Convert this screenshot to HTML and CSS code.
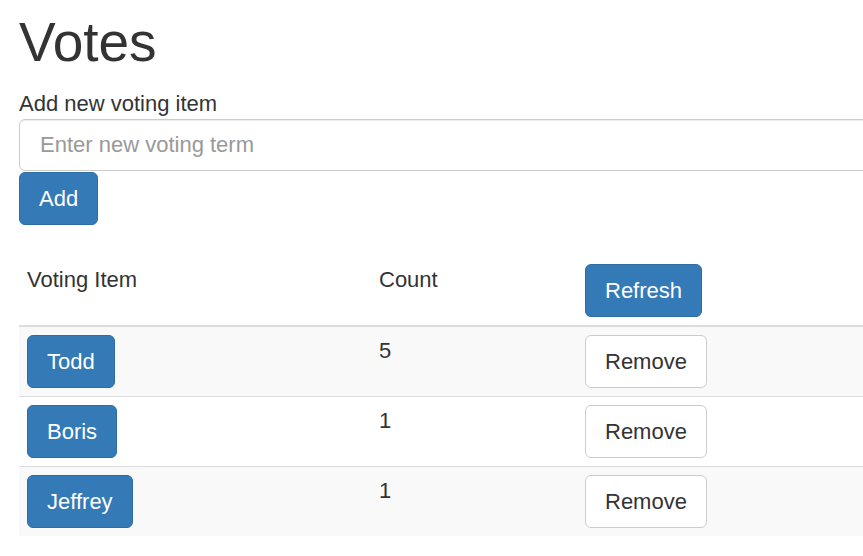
FILE: index.html
```html
<!DOCTYPE html>
<html lang="en">
<head>
<meta charset="utf-8">
<title>Votes</title>
<link rel="stylesheet" href="styles.css">
</head>
<body>
<div class="page">
  <h1 class="title">Votes</h1>
  <form class="add-form">
    <label class="field-label" for="term">Add new voting item</label>
    <input class="field-input" id="term" type="text" placeholder="Enter new voting term">
    <button class="btn btn-primary add-btn" type="button">Add</button>
  </form>
  <table class="votes-table">
    <colgroup>
      <col class="col-item">
      <col class="col-count">
      <col class="col-action">
    </colgroup>
    <thead>
      <tr>
        <th>Voting Item</th>
        <th>Count</th>
        <th><button class="btn btn-primary" type="button">Refresh</button></th>
      </tr>
    </thead>
    <tbody>
      <tr class="striped">
        <td><button class="btn btn-primary" type="button">Todd</button></td>
        <td>5</td>
        <td><button class="btn btn-default" type="button">Remove</button></td>
      </tr>
      <tr>
        <td><button class="btn btn-primary" type="button">Boris</button></td>
        <td>1</td>
        <td><button class="btn btn-default" type="button">Remove</button></td>
      </tr>
      <tr class="striped">
        <td><button class="btn btn-primary" type="button">Jeffrey</button></td>
        <td>1</td>
        <td><button class="btn btn-default" type="button">Remove</button></td>
      </tr>
    </tbody>
  </table>
</div>
</body>
</html>
```

FILE: styles.css
```css
html, body {
  overflow: hidden;
}

body {
  margin: 0;
  background: #ffffff;
  color: #333333;
  font-family: "Liberation Sans", Arial, Helvetica, sans-serif;
  font-size: 22px;
  line-height: 1.42857;
}

.page {
  width: calc(100% + 40px);
  padding: 12px 0 0 19px;
  box-sizing: border-box;
}

.title {
  margin: 0;
  font-size: 55px;
  font-weight: 400;
  line-height: 1.1;
  color: #333333;
}

.add-form {
  margin: 15px 0 0;
  display: flex;
  flex-direction: column;
  align-items: flex-start;
}

.field-label {
  font-weight: 400;
  display: block;
}

.field-input {
  display: block;
  width: 100%;
  height: 52px;
  box-sizing: border-box;
  margin: 0;
  padding: 0 20px;
  font-family: inherit;
  font-size: 22px;
  color: #555555;
  background: #ffffff;
  border: 1px solid #cccccc;
  border-radius: 6px;
  box-shadow: inset 0 1px 1px rgba(0, 0, 0, 0.075);
  outline: none;
}

.field-input::placeholder {
  color: #999999;
}

.btn {
  display: inline-block;
  margin: 0;
  padding: 10px 19px;
  font-family: inherit;
  font-size: 22px;
  line-height: 31px;
  font-weight: 400;
  border: 1px solid transparent;
  border-radius: 6px;
  cursor: pointer;
  white-space: nowrap;
}

.btn-primary {
  color: #ffffff;
  background: #337ab7;
  border-color: #2e6da4;
}

.btn-default {
  color: #333333;
  background: #ffffff;
  border-color: #cccccc;
}

.add-btn {
  margin-top: 1px;
}

.votes-table {
  margin-top: 31px;
  width: 100%;
  border-collapse: collapse;
  table-layout: fixed;
}

.col-item { width: 352px; }
.col-count { width: 206px; }

.votes-table th,
.votes-table td {
  padding: 8px;
  text-align: left;
  vertical-align: top;
  font-weight: 400;
}

.votes-table thead th {
  border-bottom: 2px solid #dddddd;
}

.votes-table tbody td {
  border-top: 1px solid #dddddd;
}

.votes-table tbody tr:first-child td {
  border-top: 0;
}

.votes-table tr.striped {
  background: #f9f9f9;
}
```
